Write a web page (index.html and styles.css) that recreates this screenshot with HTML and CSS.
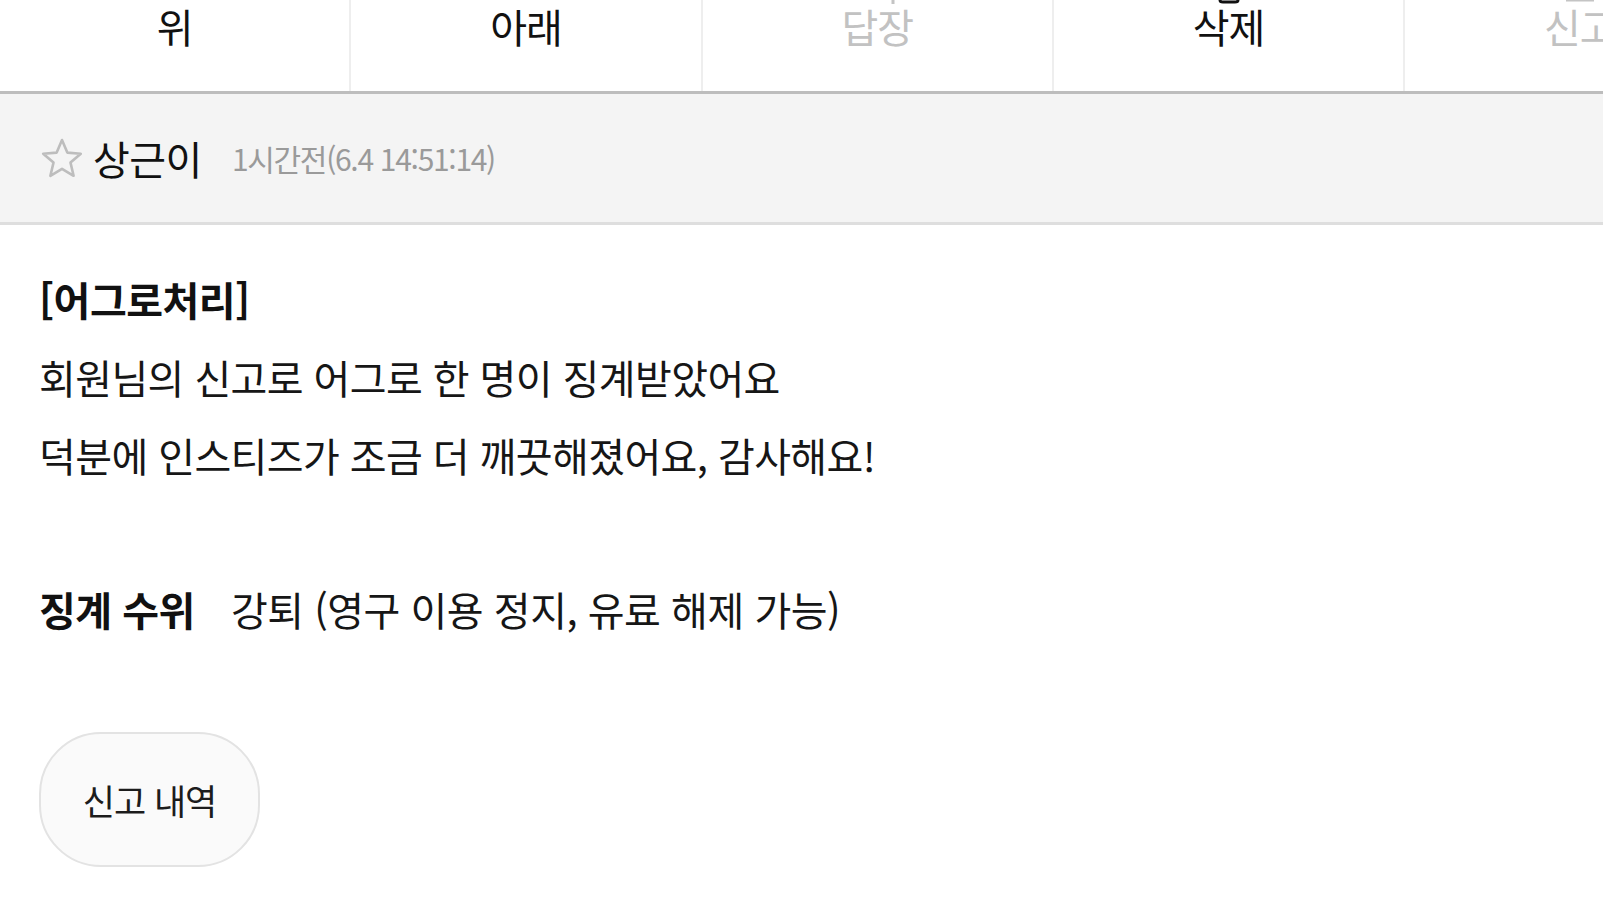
FILE: index.html
```html
<!DOCTYPE html>
<html lang="ko">
<head>
<meta charset="utf-8">
<title>신고 처리 알림</title>
<link rel="stylesheet" href="styles.css">
</head>
<body>
<div class="page">
  <nav class="tabs">
    <div class="tab">
      <div class="icon-clip"></div>
      <span class="tab-label">위</span>
    </div>
    <div class="tab">
      <div class="icon-clip"></div>
      <span class="tab-label">아래</span>
    </div>
    <div class="tab is-disabled">
      <div class="icon-clip">
        <svg class="tab-icon" viewBox="0 0 44 44"><path d="M18 10 L6 22 L18 34 M6 22 L28 22 Q38 22 38 32 L38 44" fill="none" stroke="#c4c4c4" stroke-width="3"/></svg>
      </div>
      <span class="tab-label">답장</span>
    </div>
    <div class="tab">
      <div class="icon-clip">
        <svg class="tab-icon" viewBox="0 0 44 44"><path d="M8 8 L36 8 M16 8 L16 3 L28 3 L28 8 M11 8 L13 40 Q13 42 16 42 L28 42 Q31 42 31 40 L33 8" fill="none" stroke="#111" stroke-width="3"/></svg>
      </div>
      <span class="tab-label">삭제</span>
    </div>
    <div class="tab is-disabled">
      <div class="icon-clip">
        <svg class="tab-icon" viewBox="0 0 44 44"><path d="M12 38 L12 22 Q12 10 22 10 Q32 10 32 22 L32 38 M8 40 L36 40 M22 18 L22 30" fill="none" stroke="#c4c4c4" stroke-width="3"/></svg>
      </div>
      <span class="tab-label">신고</span>
    </div>
  </nav>

  <header class="meta">
    <svg class="star" viewBox="0 0 44 42" aria-hidden="true">
      <polygon points="22,3 27.3,15.6 40.8,16.7 30.5,25.6 33.6,38.8 22,31.8 10.4,38.8 13.5,25.6 3.2,16.7 16.7,15.6" fill="none" stroke="#bdbdbd" stroke-width="2.6" stroke-linejoin="round"/>
    </svg>
    <div class="meta-text">
      <span class="author">상근이</span>
      <span class="time">1시간전(6.4 14:51:14)</span>
    </div>
  </header>

  <main class="content">
    <h1 class="title">[어그로처리]</h1>
    <p class="line">회원님의 신고로 어그로 한 명이 징계받았어요</p>
    <p class="line">덕분에 인스티즈가 조금 더 깨끗해졌어요, 감사해요!</p>

    <div class="penalty">
      <span class="penalty-label">징계 수위</span>
      <span class="penalty-value">강퇴 (영구 이용 정지, 유료 해제 가능)</span>
    </div>

    <button class="history-btn" type="button">신고 내역</button>
  </main>
</div>
</body>
</html>
```

FILE: styles.css
```css
html, body {
  margin: 0;
  padding: 0;
  background: #ffffff;
}

body {
  width: 1603px;
  height: 912px;
  overflow: hidden;
  font-family: "Noto Sans CJK KR", "Noto Sans", sans-serif;
  color: #111111;
}

.page {
  width: 1603px;
  overflow: hidden;
}

/* Tabs */
.tabs {
  display: flex;
  border-bottom: 3px solid #bdbdbd;
  width: max-content;
}

.tab {
  flex: 0 0 351.3px;
  box-sizing: border-box;
  display: flex;
  flex-direction: column;
  align-items: center;
  padding: 0 0 43px;
  border-right: 2.5px solid #eeeeee;
}

.icon-clip {
  height: 4px;
  overflow: hidden;
  display: flex;
  align-items: flex-end;
}

.tab-icon {
  width: 44px;
  height: 44px;
  display: block;
  flex: 0 0 auto;
}

.tab-label {
  display: block;
  font-size: 40px;
  line-height: 44px;
  letter-spacing: -1px;
  color: #111111;
}

.tab.is-disabled .tab-label {
  color: #c2c2c2;
}

/* Meta header */
.meta {
  display: flex;
  align-items: center;
  height: 128px;
  padding-left: 40px;
  background: #f4f4f4;
  border-bottom: 3px solid #dedede;
}

.star {
  width: 44px;
  height: 42px;
  flex: 0 0 auto;
  margin-right: 9px;
}

.meta-text {
  display: flex;
  align-items: center;
  gap: 30px;
  line-height: 1;
}

.author {
  font-size: 40px;
  letter-spacing: -0.5px;
  color: #111111;
}

.time {
  font-size: 30px;
  letter-spacing: -1.3px;
  color: #9a9a9a;
}

/* Content */
.content {
  padding: 35px 0 0 39px;
}

.title {
  margin: 0;
  font-size: 40px;
  line-height: 78px;
  letter-spacing: -0.5px;
  font-weight: 700;
  color: #111111;
}

.line {
  margin: 0;
  font-size: 40px;
  line-height: 78px;
  letter-spacing: -0.6px;
  color: #161616;
}

.penalty {
  display: flex;
  align-items: baseline;
  gap: 36px;
  margin-top: 76px;
  font-size: 40px;
  line-height: 78px;
  letter-spacing: -0.5px;
}

.penalty-label {
  font-weight: 700;
  color: #111111;
}

.penalty-value {
  color: #161616;
}

.history-btn {
  display: flex;
  align-items: center;
  justify-content: center;
  margin-top: 84px;
  width: 221px;
  height: 135px;
  padding: 0;
  border: 2px solid #e3e3e3;
  border-radius: 62px;
  background: #fafafa;
  font-family: "Noto Sans CJK KR", "Noto Sans", sans-serif;
  font-size: 35px;
  letter-spacing: -1px;
  color: #1c1c1c;
}
```
